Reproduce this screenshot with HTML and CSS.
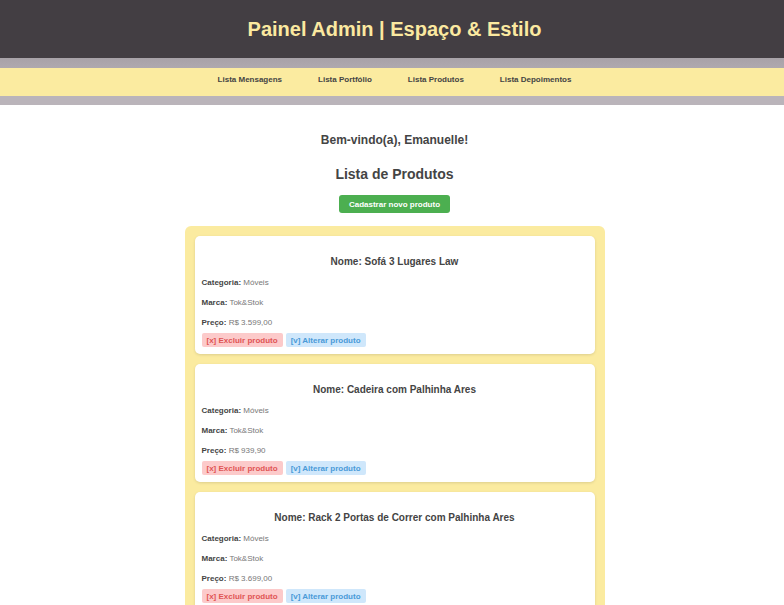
FILE: index.html
```html
<!DOCTYPE html>
<html lang="pt-BR">
<head>
<meta charset="utf-8">
<title>Painel Admin</title>
<link rel="stylesheet" href="styles.css">
</head>
<body>
<header class="topo">
  <h1 class="titulo">Painel Admin | Espaço &amp; Estilo</h1>
</header>
<nav class="menu">
  <ul class="menu-lista">
    <li><a href="#">Lista Mensagens</a></li>
    <li><a href="#">Lista Portfólio</a></li>
    <li><a href="#">Lista Produtos</a></li>
    <li><a href="#">Lista Depoimentos</a></li>
  </ul>
</nav>
<main class="conteudo">
  <h2 class="boas-vindas">Bem-vindo(a), Emanuelle!</h2>
  <h2 class="secao">Lista de Produtos</h2>
  <a class="btn-novo" href="#">Cadastrar novo produto</a>
  <section class="lista">
    <article class="card">
      <h3 class="card-titulo">Nome: Sofá 3 Lugares Law</h3>
      <p class="linha"><b>Categoria:</b> Móveis</p>
      <p class="linha"><b>Marca:</b> Tok&amp;Stok</p>
      <p class="linha"><b>Preço:</b> R$ 3.599,00</p>
      <div class="acoes"><a class="btn-excluir" href="#">[x] Excluir produto</a><a class="btn-alterar" href="#">[v] Alterar produto</a></div>
    </article>
    <article class="card">
      <h3 class="card-titulo">Nome: Cadeira com Palhinha Ares</h3>
      <p class="linha"><b>Categoria:</b> Móveis</p>
      <p class="linha"><b>Marca:</b> Tok&amp;Stok</p>
      <p class="linha"><b>Preço:</b> R$ 939,90</p>
      <div class="acoes"><a class="btn-excluir" href="#">[x] Excluir produto</a><a class="btn-alterar" href="#">[v] Alterar produto</a></div>
    </article>
    <article class="card">
      <h3 class="card-titulo">Nome: Rack 2 Portas de Correr com Palhinha Ares</h3>
      <p class="linha"><b>Categoria:</b> Móveis</p>
      <p class="linha"><b>Marca:</b> Tok&amp;Stok</p>
      <p class="linha"><b>Preço:</b> R$ 3.699,00</p>
      <div class="acoes"><a class="btn-excluir" href="#">[x] Excluir produto</a><a class="btn-alterar" href="#">[v] Alterar produto</a></div>
    </article>
  </section>
</main>
</body>
</html>
```
FILE: styles.css
```css
* { box-sizing: border-box; }
body {
  margin: 0;
  font-family: "Liberation Sans", Arial, sans-serif;
  background: #ffffff;
  color: #444;
}
.topo {
  background: #433e43;
  height: 58px;
  padding-left: 5px;
  display: flex;
  align-items: center;
  justify-content: center;
}
.titulo {
  margin: 0;
  color: #fbe9a0;
  font-size: 20px;
  font-weight: bold;
}
.menu {
  background: linear-gradient(#a8a2a8, #bab4ba 60%, #bab4ba);
  padding: 10px 0 9px;
}
.menu-lista {
  list-style: none;
  margin: 0;
  padding: 7px 0 0 5px;
  height: 28px;
  background: #fbeba0;
  display: flex;
  justify-content: center;
  align-items: flex-start;
  gap: 36px;
}
.menu-lista li {
  font-size: 8px;
  line-height: 9px;
}
.menu-lista a {
  color: #444;
  text-decoration: none;
  font-weight: bold;
}
.conteudo {
  display: flex;
  flex-direction: column;
  align-items: center;
  padding: 28px 0 0 5px;
}
.boas-vindas {
  margin: 0;
  font-size: 12px;
  line-height: 14px;
  color: #444;
}
.secao {
  margin: 19px 0 0;
  font-size: 14px;
  line-height: 17px;
  color: #444;
}
.btn-novo {
  margin-top: 12px;
  background: #4caf50;
  color: #fff;
  font-size: 8px;
  font-weight: bold;
  text-decoration: none;
  width: 111px;
  height: 18px;
  display: flex;
  align-items: center;
  justify-content: center;
  border-radius: 3px;
}
.lista {
  margin-top: 13px;
  width: 420px;
  background: #fbeba0;
  border-radius: 6px;
  padding: 10px;
  display: flex;
  flex-direction: column;
  gap: 10px;
}
.card {
  background: #fff;
  border-radius: 5px;
  padding: 9px 7px 7px;
  box-shadow: 0 1px 3px rgba(0,0,0,0.12);
}
.card-titulo {
  margin: 11px 0 10px;
  text-align: center;
  font-size: 10px;
  line-height: 12px;
  color: #444;
}
.linha {
  margin: 0 0 11px;
  font-size: 8px;
  line-height: 9px;
  color: #777;
}
.linha b { color: #444; }
.linha:nth-of-type(3) { margin-bottom: 6px; }
.acoes {
  display: flex;
  gap: 3px;
}
.acoes a {
  font-size: 8px;
  font-weight: bold;
  text-decoration: none;
  height: 14px;
  padding: 0 5px;
  display: flex;
  align-items: center;
  border-radius: 2px;
}
.btn-excluir { background: #fccaca; color: #e05555; }
.btn-alterar { background: #cfe7fb; color: #4a9ad8; }
```
